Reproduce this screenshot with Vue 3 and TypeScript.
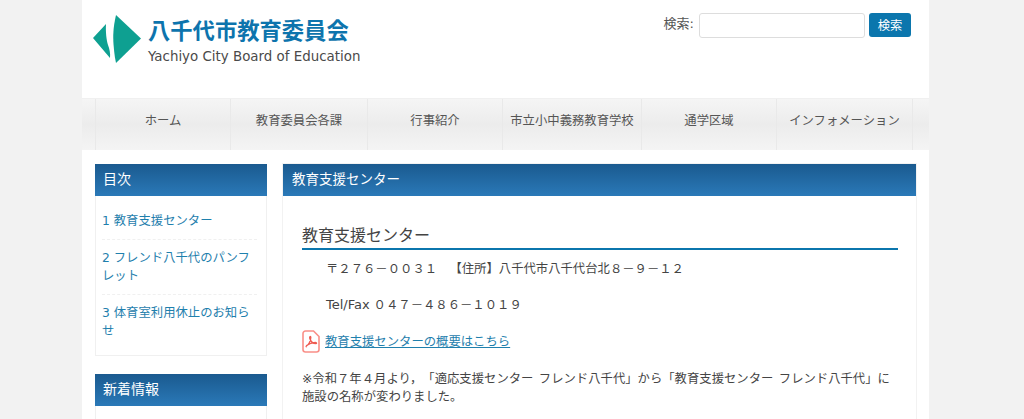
<script setup lang="ts">
const nav = [
  { label: 'ホーム', w: 135 },
  { label: '教育委員会各課', w: 137 },
  { label: '行事紹介', w: 135 },
  { label: '市立小中義務教育学校', w: 139 },
  { label: '通学区域', w: 135 },
  { label: 'インフォメーション', w: 137 },
]
const toc = ['1 教育支援センター', '2 フレンド八千代のパンフレット', '3 体育室利用休止のお知らせ']
</script>

<template>
  <div class="page">
    <header class="head">
      <div class="logo">
        <svg class="mark" width="50" height="50" viewBox="0 0 50 50">
          <path d="M23 1 L48 24.5 L23 49 C21.5 42 21 36 20.5 30 C20 22 20 14 23 1 Z" fill="#0ea091" />
          <path d="M13 10 L0 24 L17 44 C17.5 39 16.5 35 15 31 C13.5 26 12.5 18 13 10 Z" fill="#0ea091" />
        </svg>
        <div class="logo-text">
          <div class="logo-ja">八千代市教育委員会</div>
          <div class="logo-en">Yachiyo City Board of Education</div>
        </div>
      </div>
      <form class="search" @submit.prevent>
        <label class="search-label">検索:</label>
        <input class="search-input" type="text" />
        <button class="search-btn" type="submit">検索</button>
      </form>
    </header>

    <nav class="nav">
      <a v-for="n in nav" :key="n.label" class="nav-item" :style="{ width: n.w + 'px' }">{{ n.label }}</a>
    </nav>

    <div class="body">
      <aside class="side">
        <section class="widget">
          <h3 class="bar">目次</h3>
          <ul class="toc">
            <li v-for="t in toc" :key="t">{{ t }}</li>
          </ul>
        </section>
        <section class="widget">
          <h3 class="bar">新着情報</h3>
          <div class="news"></div>
        </section>
      </aside>

      <main class="main">
        <h1 class="bar">教育支援センター</h1>
        <article class="content">
          <h2 class="title">教育支援センター</h2>
          <p class="indent">〒２７６－００３１　【住所】八千代市八千代台北８－９－１２</p>
          <p class="indent"><span class="latin">Tel/Fax</span> ０４７－４８６－１０１９</p>
          <p class="pdf">
            <svg class="pdf-icon" width="18" height="23" viewBox="0 0 18 23">
              <path d="M3.5 1 H11.5 L17 6.5 V19.5 A2.5 2.5 0 0 1 14.5 22 H3.5 A2.5 2.5 0 0 1 1 19.5 V3.5 A2.5 2.5 0 0 1 3.5 1 Z" fill="#fff" stroke="#f98f88" stroke-width="1.6" />
              <path d="M4 16.5 C6.5 15 8.8 11 8.8 7.5 C8.8 6 7.3 6.2 7.7 8 C8.4 11 10.8 13.6 14 13.7 C15 13.5 14.6 12.5 13.2 12.5 C10.2 12.6 6.6 14 4.6 15.6 C3.9 16.3 4 16.9 4.6 16.7" fill="none" stroke="#ee5a50" stroke-width="1.3" />
            </svg>
            <a class="link">教育支援センターの概要はこちら</a>
          </p>
          <p class="note">※令和７年４月より，「適応支援センター フレンド八千代」から「教育支援センター フレンド八千代」に<br />施設の名称が変わりました。</p>
        </article>
      </main>
    </div>
  </div>
</template>

<style>
html, body { margin: 0; padding: 0; background: #f2f2f2; overflow: hidden; }
</style>

<style scoped>
.page {
  width: 847px;
  height: 419px;
  margin-left: 82px;
  background: #fff;
  overflow: hidden;
  font-family: "DejaVu Sans", "Noto Sans CJK JP", sans-serif;
  font-size: 12.35px;
  color: #444;
  box-sizing: border-box;
  text-spacing-trim: space-all;
}
.head {
  height: 98px;
  display: flex;
  justify-content: space-between;
  padding: 13px 18px 0 11px;
  box-sizing: border-box;
}
.logo { display: flex; gap: 5px; }
.mark { margin-top: 1px; }
.logo-text { display: flex; flex-direction: column; }
.logo-ja {
  font-family: "Noto Sans CJK JP", sans-serif;
  font-weight: 700;
  font-size: 22.3px;
  line-height: 32px;
  color: #0d74ad;
}
.logo-en {
  font-family: "DejaVu Sans", sans-serif;
  font-size: 13.4px;
  line-height: 20px;
  margin-top: 2px;
  color: #4a4a4a;
}
.search { display: flex; align-items: flex-start; gap: 4px; height: 25px; }
.search-label { line-height: 22px; font-size: 13px; color: #555; margin-right: 1px; }
.search-input {
  width: 166px;
  height: 25px;
  box-sizing: border-box;
  border: 1px solid #ddd;
  border-radius: 3px;
  background: #fff;
  margin: 0;
}
.search-btn {
  width: 42px;
  height: 24px;
  border: 0;
  border-radius: 3px;
  background: #0b76ad;
  color: #fff;
  font-family: "Noto Sans CJK JP", sans-serif;
  font-size: 12.35px;
  padding: 0;
}
.nav {
  height: 52px;
  display: flex;
  padding-left: 13px;
  background: linear-gradient(#f5f5f5, #ececec 50%, #f4f4f4);
  box-sizing: border-box;
  border-top: 1px solid #f0f0f0;
}
.nav-item {
  box-sizing: border-box;
  border-left: 1px solid #e9e9e9;
  display: flex;
  align-items: center;
  justify-content: center;
  padding-bottom: 10px;
  font-family: "Noto Sans CJK JP", sans-serif;
  font-size: 12.35px;
  color: #555;
  flex: none;
}
.nav-item:last-child { border-right: 1px solid #e9e9e9; }
.body {
  display: flex;
  gap: 16px;
  padding: 14px 13px 0;
  align-items: flex-start;
}
.side { width: 172px; flex: none; display: flex; flex-direction: column; gap: 18px; }
.main { width: 633px; flex: none; box-shadow: 0 0 0 1px #f2f2f2; height: 300px; }
.bar {
  margin: 0;
  height: 32px;
  line-height: 28px;
  padding-left: 9px;
  color: #fff;
  font-weight: 400;
  font-family: "Noto Sans CJK JP", sans-serif;
  font-size: 13.5px;
  background: linear-gradient(#1a5a8f, #2a79b8);
  box-sizing: border-box;
}
.side .bar { font-size: 14px; padding-left: 8px; }
.toc {
  list-style: none;
  margin: 0;
  padding: 7px 9px 0 6px;
  border: 1px solid #f0f0f0;
  border-top: 0;
  height: 160px;
  box-sizing: border-box;
  color: #1f80ad;
  line-height: 18px;
  font-size: 12.35px;
}
.toc li { padding: 9px 0 9px; border-bottom: 1px dashed #f0f0f0; }
.toc li:last-child { border-bottom: 0; }
.news { height: 60px; border: 1px solid #f0f0f0; border-top: 0; }
.content { padding: 24px 18px 0 19px; }
.title {
  margin: 0;
  font-weight: 400;
  font-size: 16px;
  line-height: 28px;
  height: 28px;
  border-bottom: 2px solid #0b76ad;
  font-family: "Noto Sans CJK JP", sans-serif;
  color: #444;
  box-sizing: content-box;
}
.content p { margin: 0; line-height: 18px; }
.indent { padding-left: 24px; margin-top: 10px !important; margin-bottom: 18px !important; }
.latin { font-size: 13px; }
.indent + .indent { margin-top: 0 !important; margin-bottom: 16px !important; }
.pdf { display: flex; align-items: center; gap: 5px; margin-bottom: 17px !important; }
.link { color: #1f80ad; text-decoration: underline; }
.note { color: #444; word-spacing: 1.5px; }
</style>
